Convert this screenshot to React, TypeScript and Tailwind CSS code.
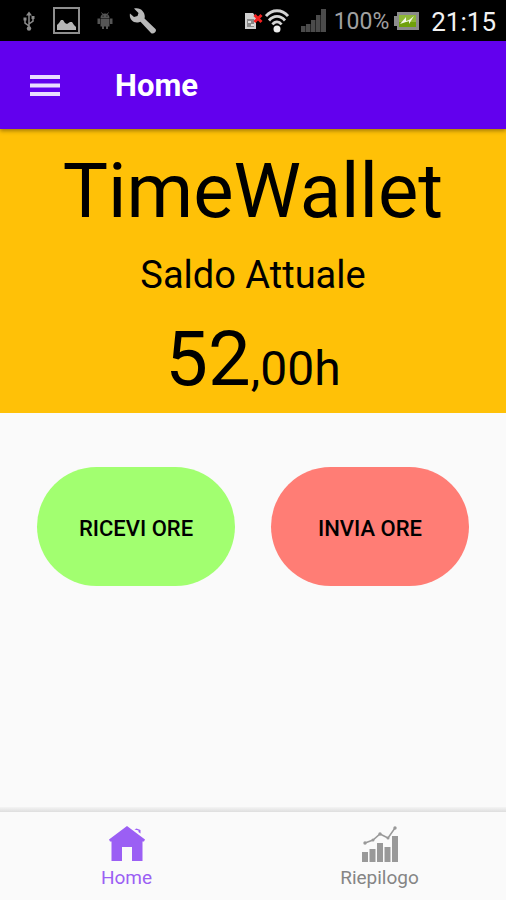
import React from "react";

function UsbIcon() {
  return (
    <svg className="h-5 w-3" viewBox="0 0 12 20" fill="none" stroke="#8c8c8c" strokeWidth="1.5" aria-hidden="true">
      <path d="M6 3v13M6 15L2 12V8M6 13l4-3V6" />
      <path d="M3 4.500L6 .5l3 4z" fill="#8c8c8c" stroke="none" />
      <circle cx="6" cy="17.500" r="2.200" fill="#8c8c8c" stroke="none" />
      <path d="M.5 6.500h3v3h-3zM8.500 5h3v3h-3z" fill="#8c8c8c" stroke="none" />
    </svg>
  );
}

function PictureIcon() {
  return (
    <svg className="h-[27px] w-[27px]" viewBox="0 0 27 27" aria-hidden="true">
      <rect x="1" y="1" width="25" height="25" fill="none" stroke="#8f8f8f" strokeWidth="2" />
      <path d="M4 23v-5l2-2 2-3h2l2 3 2 1 3-2h2l2 3 2 2v3z" fill="#b5b5b5" />
    </svg>
  );
}

function RobotIcon() {
  return (
    <svg className="h-[17px] w-4" viewBox="0 0 16 17" fill="#555" aria-hidden="true">
      <path d="M3.500 6C3.500 3 5.500 1.500 8 1.500S12.500 3 12.500 6zM3.500 6.500h9v8h-1.500V17H9v-2.500H7V17H5v-2.500H3.500z" />
      <path d="M.5 6.500H3V12H.5zM13 6.500h2.500V12H13z" />
      <path d="M4.500.5L6 2.500M11.500.5L10 2.500" stroke="#555" />
      <path d="M5.500 3.500h1.200v1.200H5.500zM9.300 3.500h1.200v1.200H9.300z" fill="#222" />
    </svg>
  );
}

function WrenchIcon() {
  return (
    <svg className="h-7 w-7" viewBox="0 0 28 28" aria-hidden="true">
      <path d="M5 1.500L9.500 6 8.500 9 5 10 1 6.500C0 11 3 15.500 8 15.500c1.500 0 2.500-.3 3.500-.8L22 26c2 2 6.500-1.500 4.500-4L15.500 11.500c1.500-5-3-12-10.500-10z" fill="#b9b9b9" />
    </svg>
  );
}

function SimErrorIcon() {
  return (
    <svg className="h-[18px] w-[19px]" viewBox="0 0 19 18" aria-hidden="true">
      <path d="M1 1h8l3 4v12H1z" fill="#cfcfcf" />
      <path d="M3 7h7v8H3z" fill="#8a8a8a" />
      <path d="M4 9h3v2H4zM7 12h3v2H7z" fill="#ddd" />
      <path d="M10.500 3l7 7M17.500 3l-7 7" stroke="#f32020" strokeWidth="3" />
    </svg>
  );
}

function WifiIcon() {
  return (
    <svg className="h-6 w-6" viewBox="0 0 24 24" fill="none" stroke="#d4d4d4" strokeWidth="2.800" aria-hidden="true">
      <path d="M1 7C7 0 17 0 23 7M4 11.500c4.500-5.500 11.500-5.500 16 0M7.500 15.500c2.500-3.500 6.500-3.500 9 0" />
      <circle cx="12" cy="20" r="3.500" fill="#eee" stroke="none" />
    </svg>
  );
}

function SignalIcon() {
  return (
    <svg className="h-[23px] w-[25px]" viewBox="0 0 25 23" fill="#4b4b4b" aria-hidden="true">
      <path d="M0 17h4.500v6H0zM5 15h4.500v8H5zM10 11h4.500v12H10zM15 6h4.500v17H15zM20 0h5v23h-5z" />
    </svg>
  );
}

function BatteryIcon() {
  return (
    <svg className="h-[18px] w-[25px]" viewBox="0 0 25 18" aria-hidden="true">
      <path d="M3 0h22v18H3v-4H0V4h3z" fill="#8b8b8b" />
      <path d="M5 3h17v12H5z" fill="#8fb936" />
      <path d="M5 10h17v5H5z" fill="#6fa00b" />
      <path d="M6 12l6-7v4l3-1 5-4-5 8v-3l-3 1z" fill="#f4f8e8" />
    </svg>
  );
}

function StatusBar() {
  return (
    <div className="flex h-[41px] items-center justify-between bg-black pr-[10px] pl-[23px]">
      <div className="flex items-center">
        <UsbIcon />
        <span className="ml-[18px]"><PictureIcon /></span>
        <span className="ml-[17px]"><RobotIcon /></span>
        <span className="ml-4"><WrenchIcon /></span>
      </div>
      <div className="flex items-center">
        <SimErrorIcon />
        <span className="ml-[2px]"><WifiIcon /></span>
        <span className="ml-3"><SignalIcon /></span>
        <span className="ml-2 pt-[3px] text-[23px] text-[#a0a0a0]">100%</span>
        <span className="ml-[5px]"><BatteryIcon /></span>
        <span className="ml-3 pt-[3px] text-[26px] text-[#f2f2f2]">21:15</span>
      </div>
    </div>
  );
}

function HomeIcon() {
  return (
    <svg className="h-9 w-9" viewBox="0 0 36 36" fill="#9b5ff4" aria-hidden="true">
      <path d="M18 0L0 13.500l1 2h1.500V35H13V21h10v14h10.500V15.500H35l1-2z" />
      <path d="M25.500 3.500l2-1 4 1.500v3.500l-2-1.500V4.500z" />
    </svg>
  );
}

function ChartIcon() {
  return (
    <svg className="h-9 w-9" viewBox="0 0 36 36" fill="#999" aria-hidden="true">
      <path d="M0 26h6v10H0zM7.500 23h6v13h-6zM15 17h6v19h-6zM22.500 21h6v15h-6zM30 10h6v26h-6z" />
      <path d="M3 17l8-3 7-6 8 4L33 2" fill="none" stroke="#999" strokeWidth="1.500" />
      <circle cx="3" cy="17" r="1.700" />
      <circle cx="11" cy="14" r="1.500" />
      <circle cx="18" cy="8" r="1.700" />
      <circle cx="26" cy="12" r="1.500" />
      <circle cx="33" cy="2" r="1.700" />
    </svg>
  );
}

export default function App() {
  return (
    <div className="flex min-h-screen flex-col bg-[#fafafa] font-['Roboto',sans-serif] text-black">
      <StatusBar />
      <header className="z-10 flex h-[88px] items-center bg-[#6200ee] pl-[29px] text-white shadow-[0_2px_4px_rgba(0,0,0,0.35)]">
        <button type="button" aria-label="Menu" className="flex h-8 w-8 items-center">
          <svg className="h-[21px] w-8" viewBox="0 0 32 21" fill="#eadcff" aria-hidden="true">
            <path d="M1 0h30v4H1zM1 8.500h30v4H1zM1 17h30v4H1z" />
          </svg>
        </button>
        <h1 className="ml-[54px] pt-[3px] text-[31px] font-bold">Home</h1>
      </header>
      <main className="flex grow flex-col">
        <section className="flex h-[284px] flex-col items-center bg-[#ffc107] pt-4">
          <h2 className="text-[76px] leading-[92px]">TimeWallet</h2>
          <p className="mt-4 text-[38px] leading-[44px]">Saldo Attuale</p>
          <p className="mt-4 text-[76px] leading-[92px]">
            52<span className="text-[48px]">,00h</span>
          </p>
        </section>
        <div className="grid grid-cols-2 gap-9 px-[37px] pt-[54px]">
          <button type="button" className="h-[119px] rounded-full bg-[#a2ff70] pt-1 text-[22px] font-medium">RICEVI ORE</button>
          <button type="button" className="h-[119px] rounded-full bg-[#ff7d75] pt-1 text-[22px] font-medium">INVIA ORE</button>
        </div>
      </main>
      <div className="h-[5px] bg-linear-to-b from-[#f4f4f4] to-[#dedede]" />
      <nav className="grid h-[88px] grid-cols-2 text-[19px] leading-6">
        <a href="#home" className="flex flex-col items-center pt-[14px] text-[#9b5ff4]">
          <HomeIcon />
          <span className="mt-1">Home</span>
        </a>
        <a href="#riepilogo" className="flex flex-col items-center pt-[14px] text-[#858585]">
          <ChartIcon />
          <span className="mt-1">Riepilogo</span>
        </a>
      </nav>
    </div>
  );
}
